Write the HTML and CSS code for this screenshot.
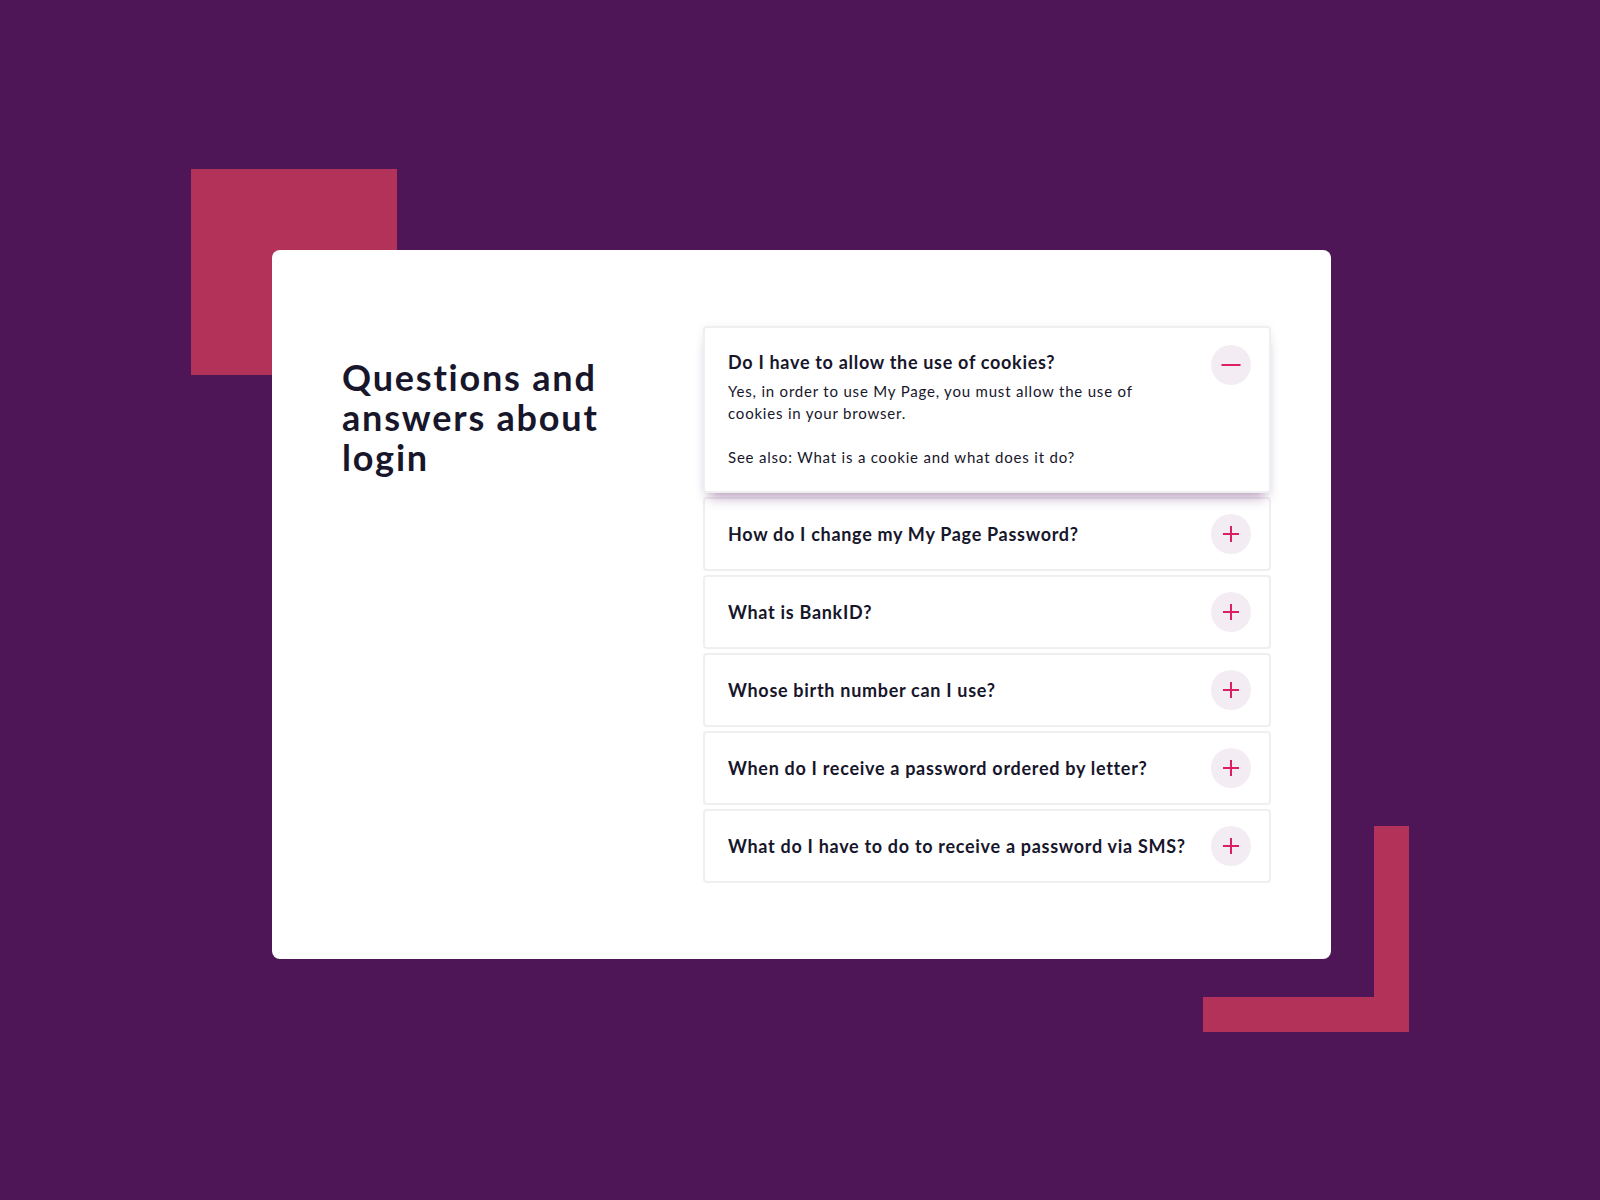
FILE: index.html
```html
<!DOCTYPE html>
<html lang="en">
<head>
<meta charset="utf-8">
<title>Questions and answers about login</title>
<link rel="stylesheet" href="styles.css">
</head>
<body>
<div class="stage">
  <div class="deco deco-square"></div>
  <div class="deco deco-corner">
    <div class="corner-v"></div>
    <div class="corner-h"></div>
  </div>
  <main class="card">
    <h1 class="title">Questions and answers about login</h1>
    <section class="faq">
      <div class="item open">
        <div class="item-text">
          <h2 class="question">Do I have to allow the use of cookies?</h2>
          <p class="answer">Yes, in order to use My Page, you must allow the use of cookies in your browser.</p>
          <p class="answer">See also: What is a cookie and what does it do?</p>
        </div>
        <span class="toggle">
          <svg viewBox="0 0 20 20" width="20" height="20"><path d="M0.5 10h19" /></svg>
        </span>
      </div>
      <div class="item">
        <h2 class="question">How do I change my My Page Password?</h2>
        <span class="toggle"><svg viewBox="0 0 20 20" width="20" height="20"><path d="M2 10h16M10 2v16" /></svg></span>
      </div>
      <div class="item">
        <h2 class="question">What is BankID?</h2>
        <span class="toggle"><svg viewBox="0 0 20 20" width="20" height="20"><path d="M2 10h16M10 2v16" /></svg></span>
      </div>
      <div class="item">
        <h2 class="question">Whose birth number can I use?</h2>
        <span class="toggle"><svg viewBox="0 0 20 20" width="20" height="20"><path d="M2 10h16M10 2v16" /></svg></span>
      </div>
      <div class="item">
        <h2 class="question">When do I receive a password ordered by letter?</h2>
        <span class="toggle"><svg viewBox="0 0 20 20" width="20" height="20"><path d="M2 10h16M10 2v16" /></svg></span>
      </div>
      <div class="item">
        <h2 class="question">What do I have to do to receive a password via SMS?</h2>
        <span class="toggle"><svg viewBox="0 0 20 20" width="20" height="20"><path d="M2 10h16M10 2v16" /></svg></span>
      </div>
    </section>
  </main>
</div>
</body>
</html>
```
FILE: styles.css
```css
* { box-sizing: border-box; }

html, body {
  margin: 0;
  padding: 0;
}

body {
  background: #4e1657;
  font-family: "Lato", "Open Sans", "Liberation Sans", sans-serif;
  color: #17162b;
  width: 1600px;
  height: 1200px;
  overflow: hidden;
}

.stage {
  position: relative;
  width: 1600px;
  height: 1200px;
  padding: 250px 0 0 272px;
}

.deco {
  position: absolute;
}

.deco-square {
  left: 191px;
  top: 169px;
  width: 206px;
  height: 206px;
  background: #b3325a;
}

.deco-corner {
  left: 1203px;
  top: 826px;
  width: 206px;
  height: 206px;
}

.corner-v {
  position: absolute;
  right: 0;
  top: 0;
  width: 35px;
  height: 206px;
  background: #b3325a;
}

.corner-h {
  position: absolute;
  left: 0;
  bottom: 0;
  width: 206px;
  height: 35px;
  background: #b3325a;
}

.card {
  position: relative;
  width: 1059px;
  height: 709px;
  background: #ffffff;
  border-radius: 8px;
  padding: 76px 60px 0 70px;
  display: grid;
  grid-template-columns: 1fr 568px;
  align-items: start;
}

.title {
  margin: 31px 0 0 0;
  font-size: 36px;
  line-height: 40px;
  font-weight: 700;
  letter-spacing: 1.8px;
  color: #17162b;
  width: 295px;
}

.faq {
  display: flex;
  flex-direction: column;
  gap: 4px;
}

.item {
  display: flex;
  align-items: center;
  justify-content: space-between;
  border: 2px solid #efeff2;
  border-radius: 4px;
  background: #fff;
  padding: 15px 18px 15px 23px;
}

.item.open {
  align-items: flex-start;
  padding: 17px 18px 23px 23px;
  box-shadow: 0 10px 12px -6px rgba(100, 40, 110, 0.45), 0 0 10px rgba(0, 0, 0, 0.05);
  position: relative;
  z-index: 1;
}

.item-text {
  padding-top: 5px;
}

.question {
  margin: 0;
  font-size: 18px;
  line-height: 24px;
  font-weight: 700;
  letter-spacing: 0.7px;
  color: #17162b;
}

.answer {
  margin: 6px 0 0 0;
  font-size: 15px;
  line-height: 22px;
  font-weight: 400;
  letter-spacing: 0.8px;
  color: #17162b;
  max-width: 430px;
}

.answer + .answer {
  margin-top: 22px;
}

.toggle {
  flex: none;
  width: 40px;
  height: 40px;
  border-radius: 50%;
  background: #f3edf3;
  display: flex;
  align-items: center;
  justify-content: center;
}

.toggle svg {
  display: block;
  fill: none;
  stroke: #dc1f5e;
  stroke-width: 2;
}
```
